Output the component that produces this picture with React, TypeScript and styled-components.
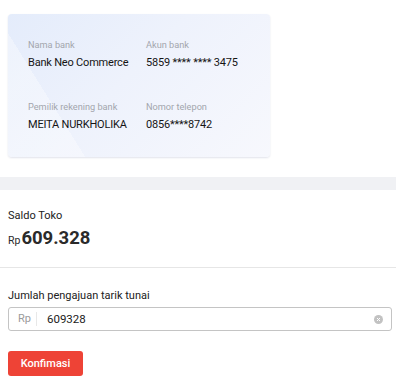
import { createGlobalStyle, styled } from 'styled-components';

const GlobalStyle = createGlobalStyle`
	html, body {
		margin: 0;
		padding: 0;
		background: #ffffff;
	}
	body {
		font-family: Roboto, 'Liberation Sans', sans-serif;
		color: #212121;
	}
	* {
		box-sizing: border-box;
	}
`;

const Page = styled.div`
	width: 396px;
	display: flex;
	flex-direction: column;
`;

const CardArea = styled.div`
	padding: 14px 8px 20px;
`;

const BankCard = styled.div`
	width: 262px;
	height: 143px;
	padding: 25px 20px 0;
	border-radius: 4px;
	background:
		linear-gradient(58deg, rgba(255, 255, 255, 0.35) 0 22%, transparent 22%),
		linear-gradient(135deg, #e4ecfb 0%, #eef2fc 45%, #f7f8fd 100%);
	box-shadow: 0 1px 2px rgba(40, 60, 110, 0.14);
	display: grid;
	grid-template-columns: 118px 1fr;
	row-gap: 31px;
	align-content: start;
`;

const Field = styled.div`
	display: flex;
	flex-direction: column;
	gap: 5px;
`;

const FieldLabel = styled.span`
	font-size: 9.2px;
	line-height: 12px;
	color: #a3a6ad;
`;

const FieldValue = styled.span`
	font-size: 11px;
	line-height: 14px;
	font-weight: 400;
	letter-spacing: -0.2px;
	color: #151515;
	white-space: nowrap;
`;

const Band = styled.div`
	height: 13px;
	background: #f0f1f4;
`;

const BalanceSection = styled.div`
	padding: 19px 8px 17px;
	border-bottom: 1px solid #e6e6e6;
	display: flex;
	flex-direction: column;
	gap: 3px;
`;

const BalanceLabel = styled.span`
	font-size: 11px;
	line-height: 14px;
	color: #212121;
`;

const Amount = styled.div`
	display: flex;
	align-items: baseline;
	font-weight: 700;
	color: #2a2a2a;
`;

const Currency = styled.span`
	font-size: 10.5px;
	font-weight: 400;
	margin-right: 1px;
`;

const AmountValue = styled.span`
	font-size: 18.5px;
	line-height: 24px;
`;

const FormSection = styled.div`
	padding: 21px 8px 0;
	display: flex;
	flex-direction: column;
`;

const InputLabel = styled.label`
	font-size: 11px;
	line-height: 14px;
	color: #212121;
	margin-bottom: 4px;
`;

const InputBox = styled.div`
	width: 384px;
	height: 24px;
	border: 1px solid #c4c4c4;
	border-radius: 3px;
	display: flex;
	align-items: center;
	padding: 0 8px 0 9px;
`;

const Prefix = styled.span`
	font-size: 11px;
	color: #9b9b9b;
	padding-right: 5px;
	border-right: 1px solid #e8e8e8;
	line-height: 14px;
`;

const ValueInput = styled.input`
	flex: 1;
	border: none;
	outline: none;
	background: transparent;
	font-family: inherit;
	font-size: 11.5px;
	color: #212121;
	padding: 0 0 0 10px;
	caret-color: #000;
`;

const ClearButton = styled.span`
	width: 9px;
	height: 9px;
	border-radius: 50%;
	background: #c2c2c2;
	display: flex;
	align-items: center;
	justify-content: center;
	margin-left: 6px;
`;

const Button = styled.button`
	margin-top: 20px;
	width: 75px;
	height: 25px;
	border: none;
	border-radius: 3px;
	background: #ee4336;
	color: #ffffff;
	font-family: inherit;
	font-size: 11px;
	font-weight: 500;
	cursor: pointer;
	padding: 0;
`;

const details = [
	{ label: 'Nama bank', value: 'Bank Neo Commerce' },
	{ label: 'Akun bank', value: '5859 **** **** 3475' },
	{ label: 'Pemilik rekening bank', value: 'MEITA NURKHOLIKA' },
	{ label: 'Nomor telepon', value: '0856****8742' },
];

export default function App() {
	return (
		<>
			<GlobalStyle />
			<Page>
				<CardArea>
					<BankCard>
						{details.map((d) => (
							<Field key={d.label}>
								<FieldLabel>{d.label}</FieldLabel>
								<FieldValue>{d.value}</FieldValue>
							</Field>
						))}
					</BankCard>
				</CardArea>
				<Band />
				<BalanceSection>
					<BalanceLabel>Saldo Toko</BalanceLabel>
					<Amount>
						<Currency>Rp</Currency>
						<AmountValue>609.328</AmountValue>
					</Amount>
				</BalanceSection>
				<FormSection>
					<InputLabel>Jumlah pengajuan tarik tunai</InputLabel>
					<InputBox>
						<Prefix>Rp</Prefix>
						<ValueInput defaultValue="609328" readOnly />
						<ClearButton>
							<svg width="5" height="5" viewBox="0 0 5 5">
								<path d="M1 1L4 4M4 1L1 4" stroke="#ffffff" strokeWidth="1" />
							</svg>
						</ClearButton>
					</InputBox>
					<div>
						<Button>Konfimasi</Button>
					</div>
				</FormSection>
			</Page>
		</>
	);
}
